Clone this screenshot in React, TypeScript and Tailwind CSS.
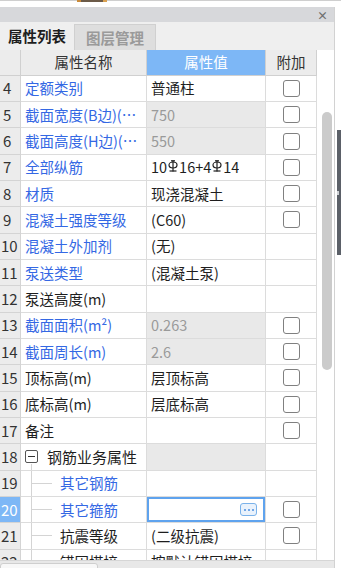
import React from 'react';

type Row = {
  n: number;
  name: string;
  blue?: boolean;
  value?: React.ReactNode;
  dis?: boolean;
  cb?: boolean;
  child?: boolean;
  group?: boolean;
  selected?: boolean;
};

// HRB400 rebar symbol
function Rebar() {
  return (
    <svg width="10" height="12" viewBox="0 0 10 12" className="inline-block mx-[1px] align-[1px]" fill="none" stroke="#1e1e1e" strokeWidth="1.2">
      <line x1="5" y1="0.5" x2="5" y2="11.5" />
      <ellipse cx="5" cy="5" rx="4" ry="3" />
      <line x1="1.5" y1="11" x2="8.5" y2="11" />
      <line x1="3" y1="0.8" x2="7" y2="0.8" />
    </svg>
  );
}

const rows: Row[] = [
  { n: 4, name: '定额类别', blue: true, value: '普通柱', cb: true },
  { n: 5, name: '截面宽度(B边)(mm)', blue: true, value: '750', dis: true, cb: true },
  { n: 6, name: '截面高度(H边)(mm)', blue: true, value: '550', dis: true, cb: true },
  {
    n: 7,
    name: '全部纵筋',
    blue: true,
    value: (
      <span>
        10<Rebar />16+4<Rebar />14
      </span>
    ),
    cb: true,
  },
  { n: 8, name: '材质', blue: true, value: '现浇混凝土', cb: true },
  { n: 9, name: '混凝土强度等级', blue: true, value: '(C60)', cb: true },
  { n: 10, name: '混凝土外加剂', blue: true, value: '(无)' },
  { n: 11, name: '泵送类型', blue: true, value: '(混凝土泵)' },
  { n: 12, name: '泵送高度(m)', value: '' },
  { n: 13, name: '截面面积(m²)', blue: true, value: '0.263', dis: true, cb: true },
  { n: 14, name: '截面周长(m)', blue: true, value: '2.6', dis: true, cb: true },
  { n: 15, name: '顶标高(m)', value: '层顶标高', cb: true },
  { n: 16, name: '底标高(m)', value: '层底标高', cb: true },
  { n: 17, name: '备注', value: '', cb: true },
  { n: 18, name: '钢筋业务属性', group: true },
  { n: 19, name: '其它钢筋', blue: true, child: true },
  { n: 20, name: '其它箍筋', blue: true, child: true, selected: true, cb: true },
  { n: 21, name: '抗震等级', child: true, value: '(二级抗震)', cb: true },
  { n: 22, name: '锚固搭接', child: true, value: '按默认锚固搭接' },
];

function Checkbox() {
  return <div className="w-[17px] h-[17px] rounded-[3px] border-[1.5px] border-[#808080] bg-white" />;
}

function NameCell({ r }: { r: Row }) {
  const color = r.blue ? 'text-[#3468e4]' : 'text-[#1e1e1e]';
  if (r.group) {
    return (
      <div className="relative flex items-center pl-[4px] gap-[9px] h-full">
        <div className="w-[13px] h-[13px] border border-[#555] rounded-[2px] flex items-center justify-center bg-white">
          <div className="w-[7px] h-px bg-[#333]" />
        </div>
        <span className="text-[#1e1e1e] text-[15px]">{r.name}</span>
        <div className="absolute left-[10px] top-[20px] bottom-0 w-px bg-[#d4d4d4]" />
      </div>
    );
  }
  if (r.child) {
    return (
      <div className="flex items-center h-full">
        <div className="ml-[10px] w-px self-stretch bg-[#d4d4d4]" />
        <div className="w-[20px] h-px bg-[#d4d4d4]" />
        <span className={`ml-[8px] ${color}`}>{r.name}</span>
      </div>
    );
  }
  return <div className={`pl-[4px] pr-[4px] truncate ${color}`}>{r.name}</div>;
}

export default function App() {
  return (
    <div
      className="w-[341px] h-[568px] overflow-hidden bg-white flex flex-col text-[14.5px] leading-[20px]"
      style={{ fontFamily: '"Noto Sans CJK SC", "Noto Sans", sans-serif' }}
    >
      {/* top strip */}
      <div className="h-[7px] shrink-0 border-t border-[#cfcfcf] relative">
        <div className="absolute left-[77px] -top-px w-[30px] h-[2px] flex">
          <div className="w-[4px] bg-[#c98a3a]" />
          <div className="w-[22px] bg-[#6b5a48]" />
          <div className="w-[4px] bg-[#d9a050]" />
        </div>
      </div>

      <div className="flex flex-1 min-h-0">
        {/* panel */}
        <div className="w-[335px] shrink-0 flex flex-col border-r border-[#d2d2d2] bg-[#efefef]">
          {/* title bar */}
          <div className="h-[15px] shrink-0 bg-[#d7d8db] flex items-center justify-end pr-[6px]">
            <span className="text-[#6e6e6e] text-[11px] font-bold leading-[12px]">×</span>
          </div>

          {/* tabs */}
          <div className="h-[28px] shrink-0 flex items-end bg-[#efefef]">
            <div className="w-[74px] h-[28px] flex items-center justify-center font-bold text-[#1e1e1e] text-[14.5px]">
              属性列表
            </div>
            <div className="w-[82px] h-[26px] flex items-center justify-center font-bold text-[#9a9a9a] bg-[#dedede] border border-b-0 border-[#d0d0d0] text-[14.5px]">
              图层管理
            </div>
          </div>

          {/* grid */}
          <div className="flex flex-1 min-h-0 bg-white">
            <div className="w-[317px] shrink-0 flex flex-col overflow-hidden">
              {/* header */}
              <div className="grid grid-cols-[21px_126px_119px_51px] h-[25.7px] shrink-0">
                <div className="bg-[#ececec] border-r border-b border-[#d0d0d0]" />
                <div className="bg-[#ececec] border-r border-b border-[#d0d0d0] flex items-center justify-center text-[#333]">
                  属性名称
                </div>
                <div className="bg-[#7db7f6] border-r border-b border-[#d0d0d0] flex items-center justify-center text-white">
                  属性值
                </div>
                <div className="bg-[#ececec] border-r border-b border-[#d0d0d0] flex items-center justify-center text-[#333]">
                  附加
                </div>
              </div>

              {rows.map((r) => (
                <div key={r.n} className="grid grid-cols-[21px_126px_119px_51px] h-[26.33px] shrink-0">
                  <div
                    className={`border-r border-b border-[#d4d4d4] flex items-center text-[15px] ${
                      r.selected ? 'bg-[#7db7f6] text-white' : 'bg-[#ececec] text-[#333]'
                    } ${r.n < 10 ? 'pl-[3px]' : 'pl-[1px]'}`}
                  >
                    {r.n}
                  </div>
                  <div className="border-r border-b border-[#dcdcdc] flex items-center min-w-0">
                    <NameCell r={r} />
                  </div>
                  {r.selected ? (
                    <div className="border-r border-b border-[#dcdcdc] p-0">
                      <div className="h-full border-2 border-[#5fa3ee] flex items-center justify-end pr-[6px]">
                        <div className="w-[17px] h-[13px] rounded-[3px] border border-[#7ab2ea] bg-[#e9f2fc] flex items-center justify-center gap-[2px]">
                          <div className="w-[2px] h-[2px] rounded-full bg-[#4a8ee0]" />
                          <div className="w-[2px] h-[2px] rounded-full bg-[#4a8ee0]" />
                          <div className="w-[2px] h-[2px] rounded-full bg-[#4a8ee0]" />
                        </div>
                      </div>
                    </div>
                  ) : (
                    <div
                      className={`border-r border-b border-[#dcdcdc] flex items-center pl-[4px] pr-[4px] min-w-0 ${
                        r.dis || r.group ? 'bg-[#e9e9e9]' : ''
                      } ${r.dis ? 'text-[#9a9a9a]' : 'text-[#1e1e1e]'}`}
                    >
                      <span className="truncate">{r.value}</span>
                    </div>
                  )}
                  <div className="border-r border-b border-[#dcdcdc] flex items-center justify-center">
                    {r.cb && <Checkbox />}
                  </div>
                </div>
              ))}
            </div>

            {/* vertical scrollbar */}
            <div className="flex-1 bg-white">
              <div className="ml-[5px] mt-[62px] w-[10px] h-[258px] rounded-full bg-[#cbcbcb]" />
            </div>
          </div>

          {/* bottom strip */}
          <div className="h-[8px] shrink-0 bg-[#e8e8e8] border-t border-[#d6d6d6] pt-[2px]">
            <div className="w-[98px] h-[8px] rounded-t-[3px] border border-[#cfcfcf] bg-[#f8f8f8]" />
          </div>
        </div>

        {/* outer edge */}
        <div className="flex-1 bg-white">
          <div className="ml-[2px] mt-[123px] h-[125px] bg-[#5b6068] flex items-center">
            <div className="w-[2px] h-[4px] bg-[#cfd2d6]" />
          </div>
        </div>
      </div>
    </div>
  );
}
